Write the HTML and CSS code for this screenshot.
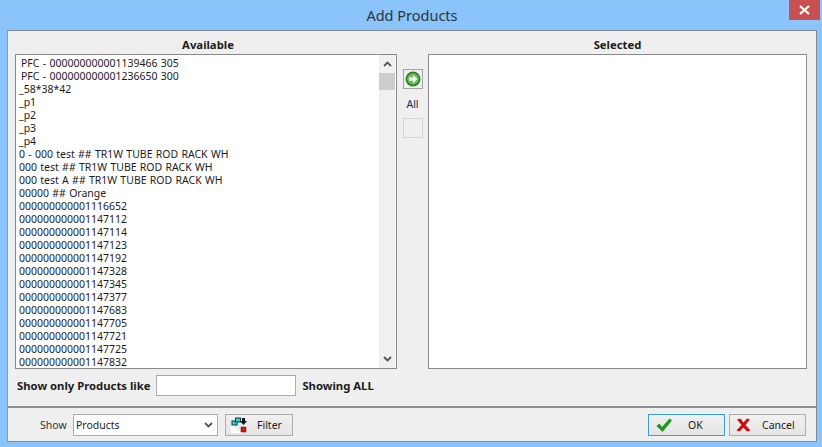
FILE: index.html
```html
<!DOCTYPE html>
<html lang="en">
<head>
    <meta charset="UTF-8">
    <title>Add Products</title>
    <link rel="stylesheet" href="styles.css">
</head>
<body>
    <div class="window">
        <div class="titlebar">
            <div class="title">Add Products</div>
            <div class="close">
                <svg width="11" height="10" viewBox="0 0 11 10"><path d="M1 1 L10 9 M10 1 L1 9" stroke="#fff" stroke-width="2.2"/></svg>
            </div>
        </div>

        <div class="dialog">
            <div class="main">
                <div class="lists">
                    <div class="column available">
                        <div class="list-label">Available</div>
                        <div class="listbox">
                            <div class="items">
                                <div class="item indent">PFC - 000000000001139466 305</div>
                                <div class="item indent">PFC - 000000000001236650 300</div>
                                <div class="item">_58*38*42</div>
                                <div class="item">_p1</div>
                                <div class="item">_p2</div>
                                <div class="item">_p3</div>
                                <div class="item">_p4</div>
                                <div class="item">0 - 000 test ## TR1W TUBE ROD RACK WH</div>
                                <div class="item">000 test ## TR1W TUBE ROD RACK WH</div>
                                <div class="item">000 test A ## TR1W TUBE ROD RACK WH</div>
                                <div class="item">00000 ## Orange</div>
                                <div class="item">000000000001116652</div>
                                <div class="item">000000000001147112</div>
                                <div class="item">000000000001147114</div>
                                <div class="item">000000000001147123</div>
                                <div class="item">000000000001147192</div>
                                <div class="item">000000000001147328</div>
                                <div class="item">000000000001147345</div>
                                <div class="item">000000000001147377</div>
                                <div class="item">000000000001147683</div>
                                <div class="item">000000000001147705</div>
                                <div class="item">000000000001147721</div>
                                <div class="item">000000000001147725</div>
                                <div class="item">000000000001147832</div>
                            </div>
                            <div class="scrollbar">
                                <svg class="arrow" width="9" height="6" viewBox="0 0 9 6"><path d="M1 5 L4.500 1.500 L8 5" fill="none" stroke="#555" stroke-width="1.800"/></svg>
                                <div class="thumb"></div>
                                <div class="track"></div>
                                <svg class="arrow" width="9" height="6" viewBox="0 0 9 6"><path d="M1 1 L4.500 4.500 L8 1" fill="none" stroke="#555" stroke-width="1.800"/></svg>
                            </div>
                        </div>
                    </div>

                    <div class="transfer">
                        <div class="transfer-btn active">
                            <svg width="16" height="16" viewBox="0 0 16 16">
                                <circle cx="8" cy="8" r="7.500" fill="#2f7f2c"/>
                                <circle cx="8" cy="8" r="5.800" fill="#6cb85c"/>
                                <path d="M4 6.200 H8 V3.600 L12.500 8 L8 12.400 V9.800 H4 Z" fill="#eef6ea"/>
                            </svg>
                        </div>
                        <div class="all-label">All</div>
                        <div class="transfer-btn"></div>
                    </div>

                    <div class="column selected">
                        <div class="list-label">Selected</div>
                        <div class="listbox"></div>
                    </div>
                </div>

                <div class="filter-row">
                    <label class="bold">Show only Products like</label>
                    <input class="filter-input" type="text">
                    <span class="bold">Showing ALL</span>
                </div>
            </div>

            <div class="footer">
                <span class="show-label">Show</span>
                <div class="combo">
                    <span>Products</span>
                    <svg width="9" height="6" viewBox="0 0 9 6"><path d="M1 1 L4.500 4.500 L8 1" fill="none" stroke="#555" stroke-width="1.800"/></svg>
                </div>
                <div class="button filter-btn">
                    <svg width="18" height="16" viewBox="0 0 18 16">
                        <path d="M0 7 L11 16 H0 Z" fill="#fff"/>
                        <rect x="1" y="4" width="5" height="4" fill="#3fd0d0" stroke="#044" stroke-width="1"/>
                        <rect x="4.500" y="1" width="5" height="4" fill="#3fd0d0" stroke="#044" stroke-width="1"/>
                        <path d="M11 1 H14 V4 H16 L12.500 8 L9 4 H11 Z" fill="#111"/>
                        <rect x="10" y="10" width="5" height="5" fill="#d01818" stroke="#700" stroke-width="0.500"/>
                    </svg>
                    <span>Filter</span>
                </div>
                <div class="spacer"></div>
                <div class="button ok-btn">
                    <svg width="18" height="16" viewBox="0 0 18 16"><path d="M1.500 9 L4.500 6.500 L7 10 L14.500 1.500 L17 3.500 L7.500 15 Z" fill="#1f9a1f"/></svg>
                    <span>OK</span>
                </div>
                <div class="button cancel-btn">
                    <svg width="15" height="14" viewBox="0 0 15 14"><path d="M1 1.500 L4.500 0.500 L7.500 4.500 L11 0.500 L14 1.500 L9.500 7 L14.500 12.500 L11 13.500 L7.500 9.500 L3.500 13.500 L0.500 12.500 L5.500 7 Z" fill="#c80f0f"/></svg>
                    <span>Cancel</span>
                </div>
            </div>
        </div>
    </div>
</body>
</html>
```

FILE: styles.css
```css
html, body {
    margin: 0;
    padding: 0;
    height: 100%;
}

body {
    font-family: 'Noto Sans', Arial, sans-serif;
    font-size: 10.5px;
    color: #1c1c1c;
    background-color: #8ac4fb;
    overflow: hidden;
}

.window {
    display: flex;
    flex-direction: column;
    height: 100%;
    box-sizing: border-box;
    padding: 0 5px 5px 7px;
}

.titlebar {
    position: relative;
    height: 30px;
    flex: none;
    display: flex;
    align-items: center;
    justify-content: center;
}

.title {
    font-size: 14.5px;
    color: #2a3440;
}

.close {
    position: absolute;
    top: 0;
    right: -3px;
    width: 31px;
    height: 20px;
    background-color: #c75050;
    display: flex;
    align-items: center;
    justify-content: center;
}

.dialog {
    flex: 1;
    display: flex;
    flex-direction: column;
    min-height: 0;
    background-color: #efefef;
    border: 1px solid #7f8a96;
    border-left-color: #8b9aa8;
}

.main {
    flex: 1;
    display: flex;
    flex-direction: column;
    min-height: 0;
    padding: 0 8px 0 7px;
    border-bottom: 2px solid #8f8f8f;
}

.lists {
    display: flex;
    height: 338px;
    flex: none;
}

.column {
    display: flex;
    flex-direction: column;
    flex: none;
}

.column.available {
    width: 382px;
}

.column.selected {
    width: 379px;
}

.list-label {
    height: 23px;
    line-height: 28px;
    text-align: center;
    font-size: 11.3px;
    font-weight: bold;
    flex: none;
}

.available .list-label {
    padding-left: 4px;
}

.listbox {
    flex: 1;
    display: flex;
    min-height: 0;
    background-color: #fff;
    border: 1px solid #8a8a8a;
    overflow: hidden;
}

.items {
    flex: 1;
    padding: 2px 0 0 3px;
    word-spacing: 0.55px;
}

.item {
    height: 13px;
    line-height: 13px;
    white-space: nowrap;
}

.item.indent {
    padding-left: 2px;
}

.scrollbar {
    flex: none;
    width: 16px;
    margin-right: 1px;
    display: flex;
    flex-direction: column;
    align-items: center;
    background-color: #f0f0f0;
}

.arrow {
    flex: none;
    margin: 6px 0;
}

.thumb {
    flex: none;
    width: 100%;
    height: 17px;
    background-color: #cdcdcd;
}

.track {
    flex: 1;
}

.transfer {
    flex: none;
    width: 31px;
    display: flex;
    flex-direction: column;
    align-items: center;
    padding-top: 38px;
}

.transfer-btn {
    width: 20px;
    height: 20px;
    box-sizing: border-box;
    border: 1px solid #d4d4d4;
    display: flex;
    align-items: center;
    justify-content: center;
}

.transfer-btn.active {
    border-color: #a5a5a5;
}

.all-label {
    height: 29px;
    line-height: 30px;
    color: #1c2a3a;
}

.filter-row {
    display: flex;
    align-items: center;
    gap: 6px;
    padding: 6px 0 0 2px;
}

.bold {
    font-size: 11.3px;
    font-weight: bold;
}

.filter-input {
    width: 140px;
    height: 21px;
    box-sizing: border-box;
    margin: 0;
    border: 1px solid #ababab;
    background-color: #fff;
}

.footer {
    flex: none;
    height: 33px;
    display: flex;
    align-items: center;
    box-sizing: border-box;
    padding: 0 10px 0 32px;
}

.show-label {
    color: #333;
    width: 33px;
    flex: none;
}

.combo {
    width: 145px;
    height: 22px;
    box-sizing: border-box;
    border: 1px solid #ababab;
    background-color: #fff;
    display: flex;
    align-items: center;
    justify-content: space-between;
    padding: 0 4px 0 2px;
    margin-right: 7px;
}

.spacer {
    flex: 1;
}

.button {
    height: 22px;
    box-sizing: border-box;
    border: 1px solid #acacac;
    background: linear-gradient(#f0f0f0, #e5e5e5);
    display: flex;
    align-items: center;
}

.filter-btn {
    width: 68px;
    padding-left: 5px;
    gap: 8px;
}

.ok-btn {
    width: 77px;
    border-color: #3d9be0;
    padding-left: 6px;
    gap: 15px;
    margin-right: 4px;
}

.cancel-btn {
    width: 77px;
    padding-left: 6px;
    gap: 11px;
}
```
